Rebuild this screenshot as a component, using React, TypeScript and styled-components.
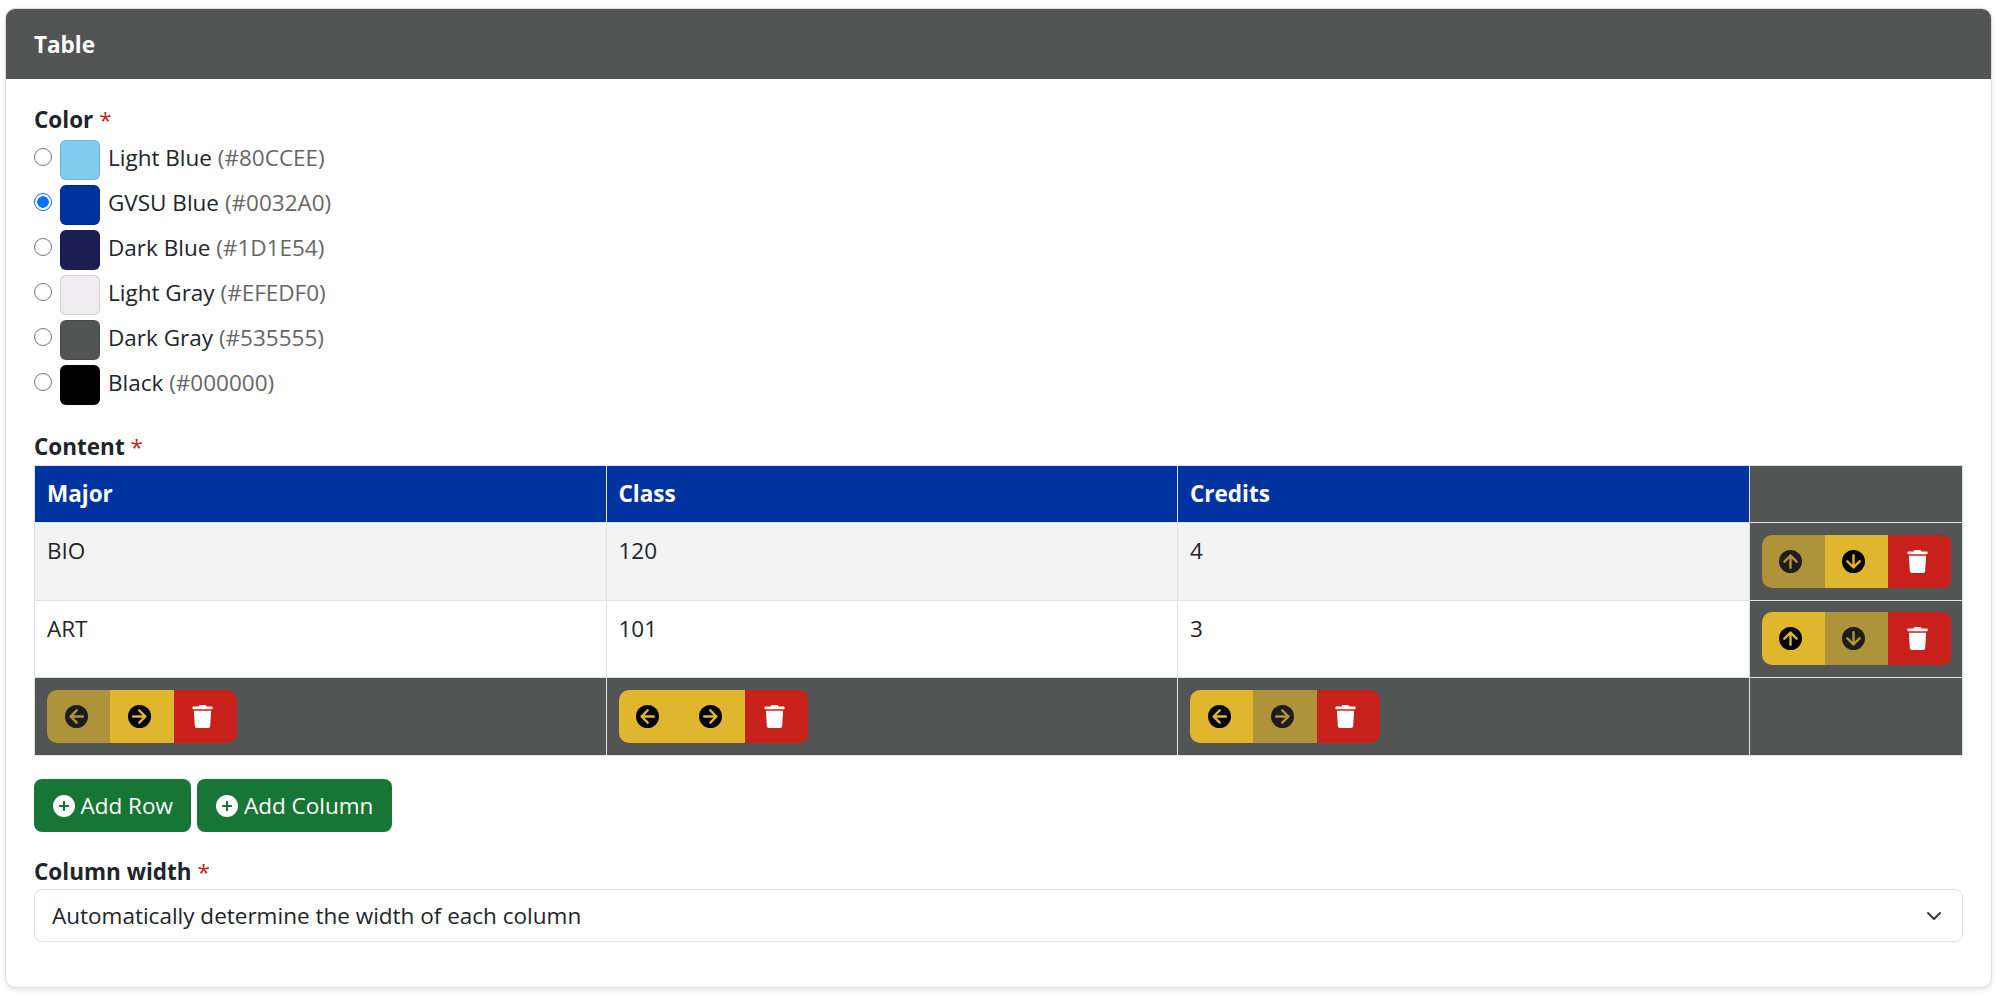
import styled, { createGlobalStyle } from 'styled-components';
import { FaTrash } from 'react-icons/fa';

const GlobalStyle = createGlobalStyle`
	html, body {
		margin: 0;
		background: #fff;
		font-family: 'Open Sans', 'Noto Sans', sans-serif;
		font-size: 22.5px;
		line-height: 1.5;
		color: #212529;
	}
	* {
		box-sizing: border-box;
	}
`;

const COLORS = [
	{ name: 'Light Blue', hex: '#80CCEE' },
	{ name: 'GVSU Blue', hex: '#0032A0', checked: true },
	{ name: 'Dark Blue', hex: '#1D1E54' },
	{ name: 'Light Gray', hex: '#EFEDF0' },
	{ name: 'Dark Gray', hex: '#535555' },
	{ name: 'Black', hex: '#000000' },
];

const ROWS = [
	['BIO', '120', '4'],
	['ART', '101', '3'],
];

const HEADERS = ['Major', 'Class', 'Credits'];

const Move = ({ disabled, deg }: { disabled?: boolean; deg: number }) => (
	<MoveButton type="button" $disabled={disabled}>
		<ArrowIcon viewBox="0 0 24 24" $deg={deg}>
			<circle cx="12" cy="12" r="12" fill="#000" />
			<path d="M12 18.6V5.8M5.6 12.2L12 5.8l6.4 6.4" fill="none" stroke="#e0b62e" strokeWidth="2.5" strokeLinecap="round" strokeLinejoin="round" />
		</ArrowIcon>
	</MoveButton>
);

const Actions = ({ children }: { children: React.ReactNode }) => (
	<ButtonGroup>
		{children}
		<DeleteButton type="button">
			<FaTrash size={23} />
		</DeleteButton>
	</ButtonGroup>
);

const PlusIcon = () => (
	<svg width="22" height="22" viewBox="0 0 24 24">
		<circle cx="12" cy="12" r="12" fill="#fff" />
		<path d="M12 7.6v8.8M7.6 12h8.8" stroke="#177535" strokeWidth="2.4" strokeLinecap="round" />
	</svg>
);

export default function App() {
	return (
		<>
			<GlobalStyle />
			<Page>
				<Card>
					<CardHeader>Table</CardHeader>
					<CardBody>
						<Label>
							Color <Required>*</Required>
						</Label>
						<RadioList>
							{COLORS.map((c) => (
								<RadioRow key={c.hex}>
									<Radio type="radio" name="color" defaultChecked={c.checked} />
									<Swatch $color={c.hex} />
									<span>
										{c.name} <Hex>({c.hex})</Hex>
									</span>
								</RadioRow>
							))}
						</RadioList>

						<ContentLabel>
							Content <Required>*</Required>
						</ContentLabel>
						<Table>
							<colgroup>
								<col width="571.5" />
								<col width="571.5" />
								<col width="571.5" />
								<col />
							</colgroup>
							<thead>
								<tr>
									{HEADERS.map((h) => (
										<HeadCell key={h}>{h}</HeadCell>
									))}
									<ToolCell />
								</tr>
							</thead>
							<tbody>
								{ROWS.map((row, i) => (
									<Row key={row[0]} $striped={i === 0}>
										{row.map((v) => (
											<Cell key={v}>{v}</Cell>
										))}
										<ToolCell>
											<Actions>
												<Move disabled={i === 0} deg={0} />
												<Move disabled={i === 1} deg={180} />
											</Actions>
										</ToolCell>
									</Row>
								))}
								<tr>
									{HEADERS.map((h, i) => (
										<ToolCell key={h}>
											<Actions>
												<Move disabled={i === 0} deg={-90} />
												<Move disabled={i === 2} deg={90} />
											</Actions>
										</ToolCell>
									))}
									<ToolCell />
								</tr>
							</tbody>
						</Table>

						<AddBar>
							<AddButton type="button">
								<PlusIcon />
								Add Row
							</AddButton>
							<AddButton type="button">
								<PlusIcon />
								Add Column
							</AddButton>
						</AddBar>

						<WidthLabel>
							Column width <Required>*</Required>
						</WidthLabel>
						<SelectBox>
							Automatically determine the width of each column
							<svg width="16" height="16" viewBox="0 0 16 16" fill="none">
								<path d="M2 5l6 6 6-6" stroke="#343a40" strokeWidth="2" strokeLinecap="round" strokeLinejoin="round" />
							</svg>
						</SelectBox>
					</CardBody>
				</Card>
			</Page>
		</>
	);
}

const Page = styled.div`
	padding: 8px 8px 7px 5px;
`;

const Card = styled.div`
	border: 1px solid #dcdcdc;
	border-radius: 10px;
	box-shadow: 0 2px 5px rgba(0, 0, 0, 0.1);
	background: #fff;
	overflow: hidden;
`;

const CardHeader = styled.div`
	height: 70px;
	padding: 2px 28px 0;
	display: flex;
	align-items: center;
	background: #535555;
	color: #fff;
	font-weight: 700;
`;

const CardBody = styled.div`
	padding: 26px 28px 45px;
`;

const Label = styled.div`
	font-weight: 700;
	height: 30px;
	line-height: 30px;
`;

const ContentLabel = styled(Label)`
	margin-top: 27px;
	margin-bottom: 3px;
`;

const WidthLabel = styled(Label)`
	margin-top: 25px;
	margin-bottom: 2px;
`;

const Required = styled.span`
	color: #c8201a;
	font-weight: 400;
`;

const RadioList = styled.div`
	display: flex;
	flex-direction: column;
	gap: 5px;
	margin-top: 5px;
`;

const RadioRow = styled.label`
	display: flex;
	align-items: flex-start;
	height: 40px;
	line-height: 36px;
`;

const Radio = styled.input`
	appearance: none;
	width: 18px;
	height: 18px;
	margin: 8px 8px 0 0;
	border: 1px solid #777;
	border-radius: 50%;
	background: #fff;

	&:checked {
		border-color: #0d6efd;
		background: radial-gradient(circle, #0d6efd 0 5.5px, #fff 6px);
	}
`;

const Swatch = styled.span<{ $color: string }>`
	width: 40px;
	height: 40px;
	margin-right: 8px;
	border-radius: 6px;
	background: ${({ $color }) => $color};
	border: 1px solid rgba(0, 0, 0, 0.12);
`;

const Hex = styled.span`
	color: #666;
`;

const Table = styled.table`
	width: 100%;
	table-layout: fixed;
	border-collapse: collapse;
`;

const HeadCell = styled.th`
	padding: 11px 12px;
	height: 57px;
	text-align: left;
	font-weight: 700;
	background: #0032a0;
	color: #fff;
	border: 1px solid #dee2e6;
`;

const Row = styled.tr<{ $striped?: boolean }>`
	background: ${({ $striped }) => ($striped ? '#f3f3f3' : '#fff')};
`;

const Cell = styled.td`
	padding: 11px 12px;
	vertical-align: top;
	border: 1px solid #dee2e6;
`;

const ToolCell = styled.td`
	padding: 11.75px 12px;
	height: 57px;
	background: #535555;
	border: 1px solid #dee2e6;
`;

const ButtonGroup = styled.div`
	display: flex;
	width: 190px;
	height: 53px;
	border-radius: 10px;
	overflow: hidden;
`;

const GroupButton = styled.button`
	flex: 1;
	border: 0;
	padding: 0 5px 0 0;
	display: flex;
	align-items: center;
	justify-content: center;
`;

const MoveButton = styled(GroupButton)<{ $disabled?: boolean }>`
	background: #e0b62e;
	opacity: ${({ $disabled }) => ($disabled ? 0.65 : 1)};
`;

const ArrowIcon = styled.svg<{ $deg: number }>`
	display: block;
	width: 23px;
	height: 23px;
	transform: rotate(${({ $deg }) => $deg}deg);
`;

const DeleteButton = styled(GroupButton)`
	background: #c8201a;
	color: #fff;
`;

const AddBar = styled.div`
	display: flex;
	gap: 6px;
	margin-top: 23.5px;
`;

const AddButton = styled.button`
	display: flex;
	align-items: center;
	gap: 6px;
	height: 53px;
	padding: 0 18.5px;
	border: 0;
	border-radius: 8px;
	background: #177535;
	color: #fff;
	font: inherit;
`;

const SelectBox = styled.div`
	display: flex;
	align-items: center;
	justify-content: space-between;
	height: 53px;
	padding: 0 20px 0 17px;
	border: 1px solid #dee2e6;
	border-radius: 8px;
`;
